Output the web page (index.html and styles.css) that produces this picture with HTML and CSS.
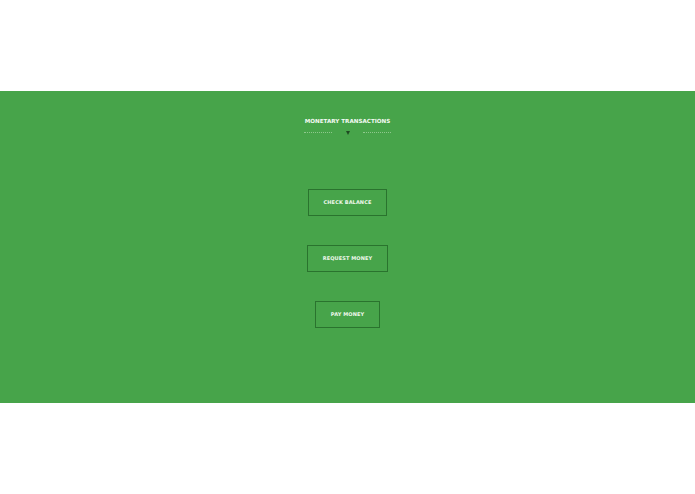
FILE: index.html
```html
<!DOCTYPE html>
<html>
<head>
<meta charset="utf-8">
<link rel="stylesheet" href="styles.css">
</head>
<body>
<div class="top"></div>
<section class="panel">
  <div class="head">
    <h2 class="title">MONETARY TRANSACTIONS</h2>
    <div class="divider">
      <span class="dots"></span>
      <span class="arrow"></span>
      <span class="dots"></span>
    </div>
  </div>
  <div class="actions">
    <a class="btn btn-check">CHECK BALANCE</a>
    <a class="btn btn-request">REQUEST MONEY</a>
    <a class="btn btn-pay">PAY MONEY</a>
  </div>
</section>
</body>
</html>
```
FILE: styles.css
```css
html, body { margin: 0; padding: 0; background: #fff; }
body { font-family: "DejaVu Sans", "Liberation Sans", sans-serif; }
.top { height: 91px; }
.panel {
  height: 312px;
  background: #47a44a;
  display: flex;
  flex-direction: column;
  align-items: center;
  box-sizing: border-box;
  padding-top: 26px;
}
.head { display: flex; flex-direction: column; align-items: center; width: 86px; }
.title {
  margin: 0;
  color: #f4faf3;
  font-size: 5.6px;
  font-weight: bold;
  letter-spacing: 0;
  line-height: 8px;
  white-space: nowrap;
}
.divider {
  margin-top: 5px;
  display: flex;
  align-items: center;
  justify-content: space-between;
  width: 87px;
  height: 5px;
}
.dots {
  width: 28px;
  height: 0;
  border-top: 1px dotted rgba(200, 230, 195, 0.55);
}
.arrow {
  width: 0; height: 0;
  border-left: 2.5px solid transparent;
  border-right: 2.5px solid transparent;
  border-top: 4px solid #1f4a22;
}
.actions {
  margin-top: 54px;
  display: flex;
  flex-direction: column;
  align-items: center;
  gap: 29px;
}
.btn {
  display: flex;
  align-items: center;
  justify-content: center;
  height: 27px;
  box-sizing: border-box;
  padding-bottom: 2px;
  border: 1px solid #2a732e;
  color: #eef8ec;
  font-size: 5px;
  font-weight: bold;
  letter-spacing: 0.1px;
  white-space: nowrap;
}
.btn-check { width: 79px; }
.btn-request { width: 81px; }
.btn-pay { width: 65px; }
```
